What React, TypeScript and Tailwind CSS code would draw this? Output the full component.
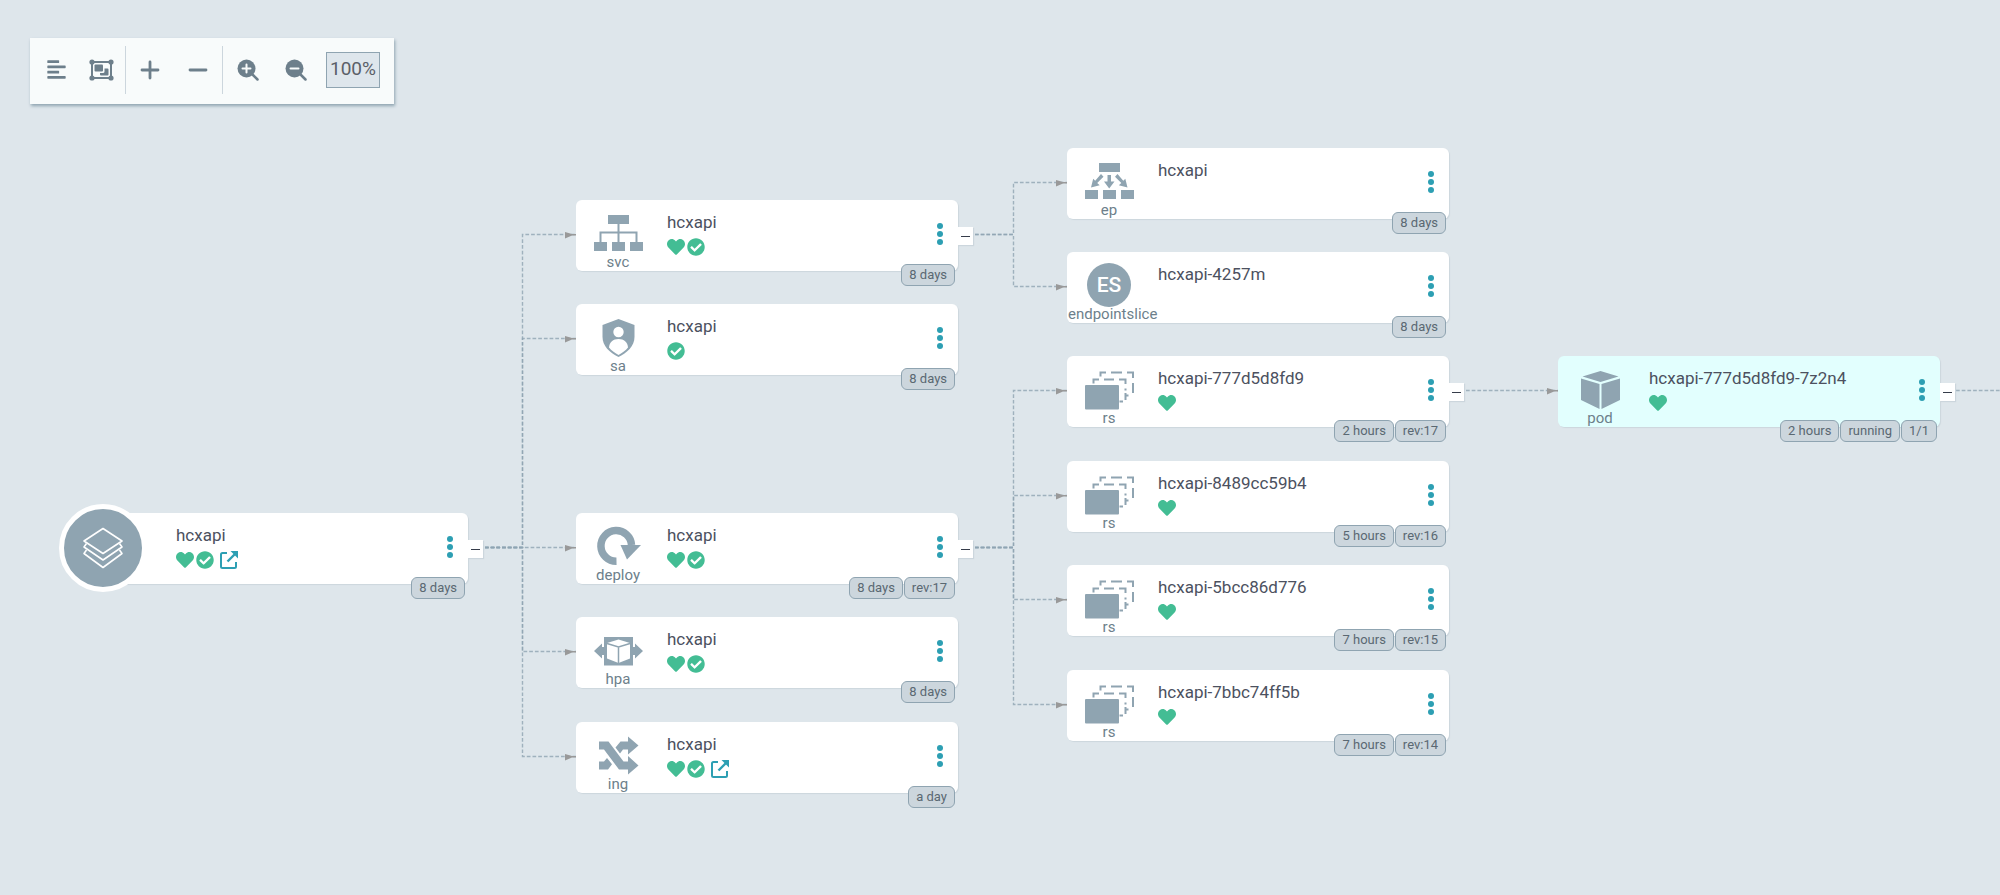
import type { ReactNode } from "react";
import { FaAlignLeft, FaCheckCircle, FaHeart } from "react-icons/fa";

type Kind = "app" | "svc" | "sa" | "deploy" | "hpa" | "ing" | "ep" | "endpointslice" | "rs" | "pod";

interface TreeNode {
  id: string;
  kind: Kind;
  name: string;
  x: number;
  y: number;
  health?: boolean;
  synced?: boolean;
  link?: boolean;
  expandable?: boolean;
  selected?: boolean;
  tags: string[];
}

const nodes: TreeNode[] = [
  { id: "app", kind: "app", name: "hcxapi", x: 86, y: 513, health: true, synced: true, link: true, expandable: true, tags: ["8 days"] },
  { id: "svc", kind: "svc", name: "hcxapi", x: 576, y: 200, health: true, synced: true, expandable: true, tags: ["8 days"] },
  { id: "sa", kind: "sa", name: "hcxapi", x: 576, y: 304, synced: true, tags: ["8 days"] },
  { id: "deploy", kind: "deploy", name: "hcxapi", x: 576, y: 513, health: true, synced: true, expandable: true, tags: ["8 days", "rev:17"] },
  { id: "hpa", kind: "hpa", name: "hcxapi", x: 576, y: 617, health: true, synced: true, tags: ["8 days"] },
  { id: "ing", kind: "ing", name: "hcxapi", x: 576, y: 722, health: true, synced: true, link: true, tags: ["a day"] },
  { id: "ep", kind: "ep", name: "hcxapi", x: 1067, y: 148, tags: ["8 days"] },
  { id: "es", kind: "endpointslice", name: "hcxapi-4257m", x: 1067, y: 252, tags: ["8 days"] },
  { id: "rs17", kind: "rs", name: "hcxapi-777d5d8fd9", x: 1067, y: 356, health: true, expandable: true, tags: ["2 hours", "rev:17"] },
  { id: "rs16", kind: "rs", name: "hcxapi-8489cc59b4", x: 1067, y: 461, health: true, tags: ["5 hours", "rev:16"] },
  { id: "rs15", kind: "rs", name: "hcxapi-5bcc86d776", x: 1067, y: 565, health: true, tags: ["7 hours", "rev:15"] },
  { id: "rs14", kind: "rs", name: "hcxapi-7bbc74ff5b", x: 1067, y: 670, health: true, tags: ["7 hours", "rev:14"] },
  { id: "pod", kind: "pod", name: "hcxapi-777d5d8fd9-7z2n4", x: 1558, y: 356, health: true, expandable: true, selected: true, tags: ["2 hours", "running", "1/1"] },
];

const edges: [string, string][] = [
  ["app", "svc"],
  ["app", "sa"],
  ["app", "deploy"],
  ["app", "hpa"],
  ["app", "ing"],
  ["svc", "ep"],
  ["svc", "es"],
  ["deploy", "rs17"],
  ["deploy", "rs16"],
  ["deploy", "rs15"],
  ["deploy", "rs14"],
  ["rs17", "pod"],
];

const CARD_WIDTH = 382;
const EDGE_Y = 34;

function Edges() {
  const byId = new Map(nodes.map((n) => [n.id, n]));
  return (
    <svg className="absolute left-0 top-0 h-full w-full" aria-hidden="true">
      <g fill="none" stroke="#8fa4b1" strokeOpacity="0.8" strokeWidth="1.400" strokeDasharray="3.700 2">
        {edges.map(([from, to]) => {
          const a = byId.get(from)!;
          const b = byId.get(to)!;
          const y1 = a.y + EDGE_Y + 0.5;
          const y2 = b.y + EDGE_Y + 0.5;
          const mid = b.x - 54 + 0.5;
          return <path key={from + to} d={`M${a.x + CARD_WIDTH + 17} ${y1}H${mid}V${y2}H${b.x}`} />;
        })}
        <path d="M1956 390.5H2600" />
      </g>
      <g fill="#999">
        {edges.map(([from, to]) => {
          const b = byId.get(to)!;
          const y = b.y + EDGE_Y + 1;
          return <path key={from + to} d={`M${b.x - 11} ${y - 3}l7 2h4v1.500h-4l-7 3z`} />;
        })}
      </g>
    </svg>
  );
}

function Glyph({ children }: { children: ReactNode }) {
  return (
    <svg viewBox="0 0 50 44" className="h-11 w-[50px] shrink-0 fill-[#8fa4b1]" aria-hidden="true">
      {children}
    </svg>
  );
}

function KindIcon({ kind }: { kind: Kind }) {
  switch (kind) {
    case "svc":
      return (
        <Glyph>
          <path d="M15 4h21v9H15zM1 31h13v9H1zM19 31h13v9H19zM37 31h13v9H37z" />
          <path d="M25.500 13v18M7.500 31V21.500H43.500V31" fill="none" stroke="#8fa4b1" strokeWidth="2" />
        </Glyph>
      );
    case "ep":
      return (
        <Glyph>
          <path d="M15 4h21v9H15zM1 31h13v9H1zM19 31h13v9H19zM37 31h13v9H37z" />
          <path d="M23.500 16h3.500v6.500h3.500L25.200 29.500 20 22.500h3.500z" />
          <path d="M17 15l2.500 2.700-6.300 6.300 2.500 2.300-8.700 2.200 2.200-8.700 2 2zM33.500 15L31 17.700l6.300 6.300-2.500 2.300 8.700 2.200-2.200-8.700-2 2z" />
        </Glyph>
      );
    case "sa":
      return (
        <Glyph>
          <path d="M25.500 4l16 6v12c0 9-7 15.500-16 20-9-4.500-16-11-16-20V10z" />
          <circle cx="25.500" cy="17" r="5.200" fill="#fff" />
          <path d="M16 32.500c.5-5.500 4-8.500 9.500-8.500s9 3 9.500 8.500c-2.500 3-5.500 5.400-9.500 7.500-4-2.100-7-4.500-9.500-7.500z" fill="#fff" />
        </Glyph>
      );
    case "deploy":
      return (
        <Glyph>
          <path d="M23.500 37.200A15.300 15.300 0 1 1 38.500 21" fill="none" stroke="#8fa4b1" strokeWidth="7.500" />
          <path d="M27.500 21H48L34 35.500z" />
        </Glyph>
      );
    case "hpa":
      return (
        <Glyph>
          <path d="M11 9h29v10h2v-3.500l8 7.500-8 7.500V27h-2v10.500H11V27H9v3.500L1 23l8-7.500V19h2z" />
          <path d="M25.500 11.500l11.500 3.500v15.500l-11.500 4.500-11.500-4.500V15z" fill="#fff" />
          <path d="M14 15.500l11.500 3.500L37 15.500M25.500 19v16" fill="none" stroke="#8fa4b1" strokeWidth="1.500" />
        </Glyph>
      );
    case "ing":
      return (
        <Glyph>
          <path d="M6 8.500h9.500l15 20H35V23l10.500 9.500-10.500 9v-5h-9L11 16.500H6z" />
          <path d="M6 28.500h5l3-3.500 5 6.200-4 5.300H6zM22.500 14.500l5-6H35V3.500l10.500 9-10.500 9v-5h-5l-3 4z" />
        </Glyph>
      );
    case "endpointslice":
      return (
        <span className="flex size-11 shrink-0 items-center justify-center rounded-full bg-[#8fa4b1] text-[21px] font-medium leading-none text-white">
          ES
        </span>
      );
    case "rs":
      return (
        <Glyph>
          <rect x="1" y="18" width="34" height="24.500" rx="1" />
          <path
            d="M9.500 16.500V12.500H15M20 12.500h10M35 12.500h6.500V17M41.500 21.500v2M41.500 26v7M41.500 28.500h3M35.500 34.500H39M16.500 9.500V5.500H22M27 5.500h11M43 5.500h6V11M49 16v10"
            fill="none"
            stroke="#8fa4b1"
            strokeWidth="2"
          />
        </Glyph>
      );
    case "pod":
      return (
        <Glyph>
          <path d="M25.500 4l18 5.500-18 5.500-18-5.500zM6 11.500l18.500 5.500v25L6 33zM45 11.500L26.500 17v25L45 33z" />
        </Glyph>
      );
    default:
      return (
        <svg viewBox="0 0 44 44" className="size-11" fill="none" stroke="#fff" strokeWidth="1.600" strokeLinejoin="round" aria-hidden="true">
          <path d="M22 2.500L41 15 22 27.500 3 15z" />
          <path d="M5.500 17.500L3 21l19 13 19-13-2.500-3.500" />
          <path d="M5.500 24L3 27.500l19 14 19-14-2.500-3.500" />
        </svg>
      );
  }
}

function ExternalLink() {
  return (
    <a href="#open" aria-label="Open application" className="ml-1">
      <svg viewBox="0 0 18 18" className="size-[18px]" fill="none" stroke="#2d9fb3" strokeWidth="2" aria-hidden="true">
        <path d="M7 2H2.500Q1 2 1 3.500V15.500Q1 17 2.500 17H14.500Q16 17 16 15.500V11" />
        <path d="M7.500 10.500L15 3" strokeWidth="2.400" />
        <path d="M10.500 0H18V7.500z" fill="#2d9fb3" stroke="none" />
      </svg>
    </a>
  );
}

function NodeCard({ node }: { node: TreeNode }) {
  const isApp = node.kind === "app";
  return (
    <article
      className={`absolute flex h-[71px] w-[382px] rounded-md shadow-[1px_1px_1px_#ccd6dd] ${node.selected ? "bg-[#e2fffe]" : "bg-white"}`}
      style={{ left: node.x, top: node.y }}
    >
      {isApp ? (
        <div className="absolute -left-[27px] -top-[9px] flex size-[88px] items-center justify-center rounded-full border-[5px] border-white bg-[#8fa4b1]">
          <KindIcon kind="app" />
        </div>
      ) : (
        <div className="flex w-[83px] shrink-0 flex-col pl-px pt-[11px] text-[15px] leading-[15px] text-[#6d7f8b] [align-items:safe_center]">
          <KindIcon kind={node.kind} />
          <span className="whitespace-nowrap">{node.kind}</span>
        </div>
      )}
      <div className={`flex flex-col gap-0.5 pt-[11px] ${isApp ? "pl-[90px]" : "pl-2"}`}>
        <h2 className="whitespace-nowrap text-[17px] leading-[22px] text-[#4c5160]">{node.name}</h2>
        <div className="flex h-6 items-center gap-0.5 text-lg text-[#43bd94]">
          {node.health && <FaHeart title="Healthy" />}
          {node.synced && <FaCheckCircle title="Synced" />}
          {node.link && <ExternalLink />}
        </div>
      </div>
      <button type="button" aria-label="Node actions" className="absolute right-[15px] top-[23px] flex flex-col gap-0.5">
        <i className="size-1.5 rounded-full bg-[#2d9fb3]" />
        <i className="size-1.5 rounded-full bg-[#2d9fb3]" />
        <i className="size-1.5 rounded-full bg-[#2d9fb3]" />
      </button>
      {node.expandable && (
        <button
          type="button"
          aria-label="Collapse"
          className="absolute -right-[15px] top-[27px] flex h-[18px] w-[15px] items-center justify-center bg-white shadow-[1px_1px_1px_#ccd6dd]"
        >
          <i className="h-px w-[9px] bg-[#363c4a]" />
        </button>
      )}
      <ul className="absolute right-[3px] top-16 flex gap-px text-[13px] leading-5 text-[#5a6872]">
        {node.tags.map((tag) => (
          <li key={tag} className="whitespace-nowrap rounded-md border border-[#8fa4b1] bg-[#ccd6dd] px-[7px]">
            {tag}
          </li>
        ))}
      </ul>
    </article>
  );
}

function GroupIcon() {
  return (
    <svg viewBox="0 0 25 22" className="h-[22px] w-[25px]" aria-hidden="true">
      <rect x="3" y="3" width="19" height="16" fill="none" stroke="#6d7f8b" strokeWidth="2" />
      <g fill="#6d7f8b">
        <circle cx="3" cy="3" r="2.600" />
        <circle cx="22" cy="3" r="2.600" />
        <circle cx="3" cy="19" r="2.600" />
        <circle cx="22" cy="19" r="2.600" />
        <rect x="5.500" y="5.500" width="8.500" height="7" rx="1" />
        <path d="M15.500 9.500H18.500q1 0 1 1V15.500q0 1-1 1H12q-1 0-1-1V14h3q1.500 0 1.500-1.500z" />
      </g>
    </svg>
  );
}

function StrokeIcon({ d }: { d: string }) {
  return (
    <svg viewBox="0 0 20 20" className="size-5" fill="none" stroke="#6d7f8b" strokeWidth="2.800" strokeLinecap="round" aria-hidden="true">
      <path d={d} />
    </svg>
  );
}

function ZoomIcon({ plus = false }: { plus?: boolean }) {
  return (
    <svg viewBox="0 0 22 22" className="size-[22px]" fill="none" strokeLinecap="round" aria-hidden="true">
      <circle cx="9.500" cy="9.500" r="9" fill="#6d7f8b" />
      <path d="M15.500 15.500L20.500 20.500" stroke="#6d7f8b" strokeWidth="2.500" />
      <path d={plus ? "M5.500 9.500h8M9.500 5.500v8" : "M5.500 9.500h8"} stroke="#f8fbfb" strokeWidth="2" />
    </svg>
  );
}

function Tool({ label, children }: { label: string; children: ReactNode }) {
  return (
    <button type="button" aria-label={label} className="flex h-12 w-12 items-center justify-center">
      {children}
    </button>
  );
}

function Toolbar() {
  return (
    <div
      role="toolbar"
      className="absolute left-[30px] top-[38px] flex h-[66px] items-center bg-[#f8fbfb] pb-[3px] pl-0.5 pr-3.5 text-[21px] text-[#6d7f8b] shadow-[1px_2px_3px_#8fa4b1]"
    >
      <Tool label="Compact">
        <FaAlignLeft className="w-[19px]" />
      </Tool>
      <div className="-ml-[3px] flex border-r border-[#ccd6dd]">
        <Tool label="Group nodes">
          <GroupIcon />
        </Tool>
      </div>
      <div className="flex border-r border-[#ccd6dd]">
        <Tool label="Expand">
          <StrokeIcon d="M2 10h16M10 2v16" />
        </Tool>
        <Tool label="Collapse all">
          <StrokeIcon d="M2 10h16" />
        </Tool>
      </div>
      <div className="flex pl-px">
        <Tool label="Zoom in">
          <ZoomIcon plus />
        </Tool>
        <Tool label="Zoom out">
          <ZoomIcon />
        </Tool>
      </div>
      <output className="ml-1.5 flex h-9 w-[54px] items-center justify-center border border-[#8fa4b1] bg-[#dee6ec] text-[19px] text-[#5a6068]">
        100%
      </output>
    </div>
  );
}

export default function App() {
  return (
    <main className="relative min-h-screen w-full overflow-hidden bg-[#dee6eb] font-['Roboto',sans-serif]">
      <Edges />
      {nodes.map((node) => (
        <NodeCard key={node.id} node={node} />
      ))}
      <Toolbar />
    </main>
  );
}
